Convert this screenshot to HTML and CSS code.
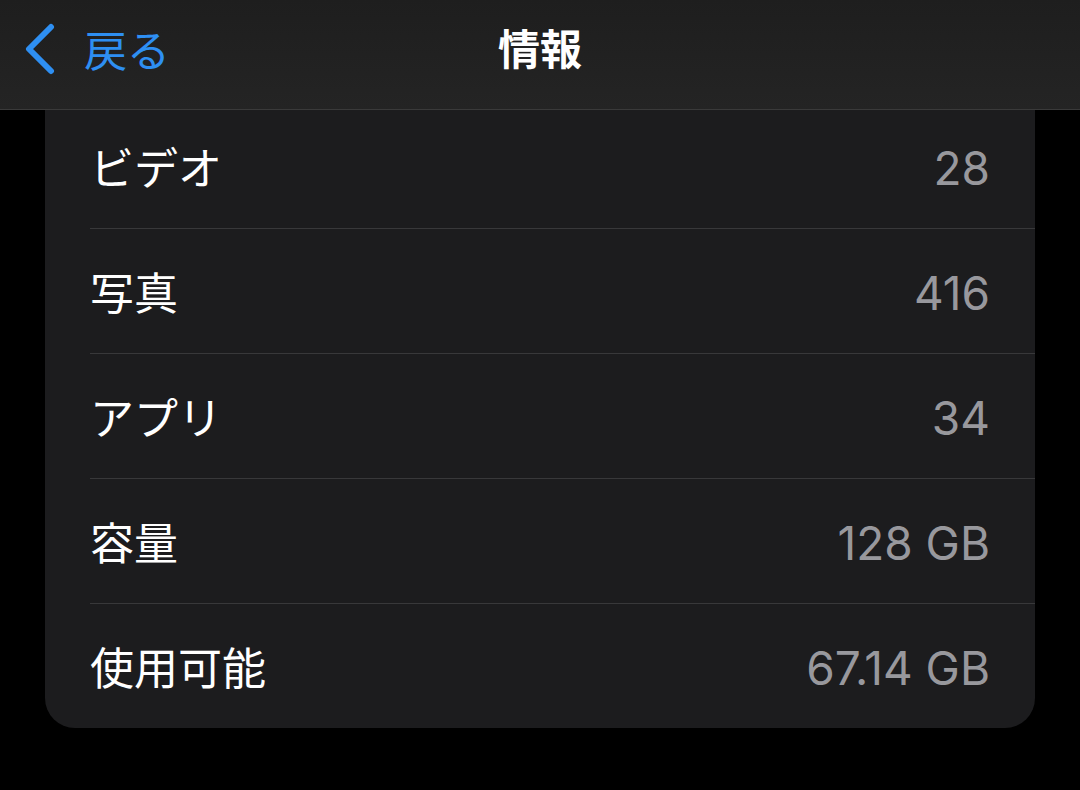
FILE: index.html
```html
<!DOCTYPE html>
<html lang="ja">
<head>
<meta charset="utf-8">
<link rel="stylesheet" href="styles.css">
</head>
<body>
<div class="screen">
  <header class="navbar">
    <a class="back">
      <svg class="chev" width="34" height="52" viewBox="0 0 34 52"><path d="M29 4 L7 26 L29 48" fill="none" stroke="#2e8ff2" stroke-width="6" stroke-linecap="round" stroke-linejoin="round"/></svg>
      <span class="back-label">戻る</span>
    </a>
    <h1 class="title">情報</h1>
  </header>
  <main class="content">
    <section class="card">
      <div class="row"><span class="label">ビデオ</span><span class="value">28</span></div>
      <div class="row"><span class="label">写真</span><span class="value">416</span></div>
      <div class="row"><span class="label">アプリ</span><span class="value">34</span></div>
      <div class="row"><span class="label">容量</span><span class="value">128 GB</span></div>
      <div class="row"><span class="label">使用可能</span><span class="value">67.14 GB</span></div>
    </section>
  </main>
</div>
</body>
</html>
```

FILE: styles.css
```css
html, body {
  margin: 0;
  padding: 0;
  background: #000;
}
body {
  font-family: Inter, "Noto Sans CJK JP", sans-serif;
  width: 1080px;
  height: 790px;
  overflow: hidden;
}
.screen {
  position: relative;
  width: 1080px;
  height: 790px;
  overflow: hidden;
}
.navbar {
  position: absolute;
  top: 0;
  left: 0;
  right: 0;
  height: 109px;
  background: linear-gradient(180deg, #1e1e1e 0%, #242424 100%);
  border-bottom: 1px solid #3a3a3a;
  display: flex;
  align-items: center;
  justify-content: center;
  z-index: 2;
}
.back {
  position: absolute;
  left: 22px;
  top: 23px;
  display: flex;
  align-items: center;
  gap: 28px;
}
.back-label {
  color: #2e8ff2;
  font-family: "Noto Sans CJK JP", sans-serif;
  font-size: 43px;
  line-height: 52px;
  margin-top: -2px;
}
.title {
  margin: 0;
  color: #fff;
  font-family: "Noto Sans CJK JP", sans-serif;
  font-weight: 700;
  font-size: 42px;
  line-height: 1;
  margin-top: -16px;
}
.content {
  padding: 0 45px;
}
.card {
  margin-top: 70px;
  padding-top: 34px;
  background: #1c1c1e;
  border-radius: 30px;
  padding-left: 45px;
  overflow: hidden;
}
.row {
  height: 124px;
  display: flex;
  align-items: center;
  justify-content: space-between;
  padding-right: 45px;
  border-bottom: 1px solid #38383a;
}
.row:last-child {
  border-bottom: none;
}
.label {
  color: #fff;
  font-size: 44px;
  font-family: "Noto Sans CJK JP", sans-serif;
}
.value {
  color: #98989d;
  font-size: 46px;
  font-family: Inter, sans-serif;
  margin-top: 4px;
}
```
